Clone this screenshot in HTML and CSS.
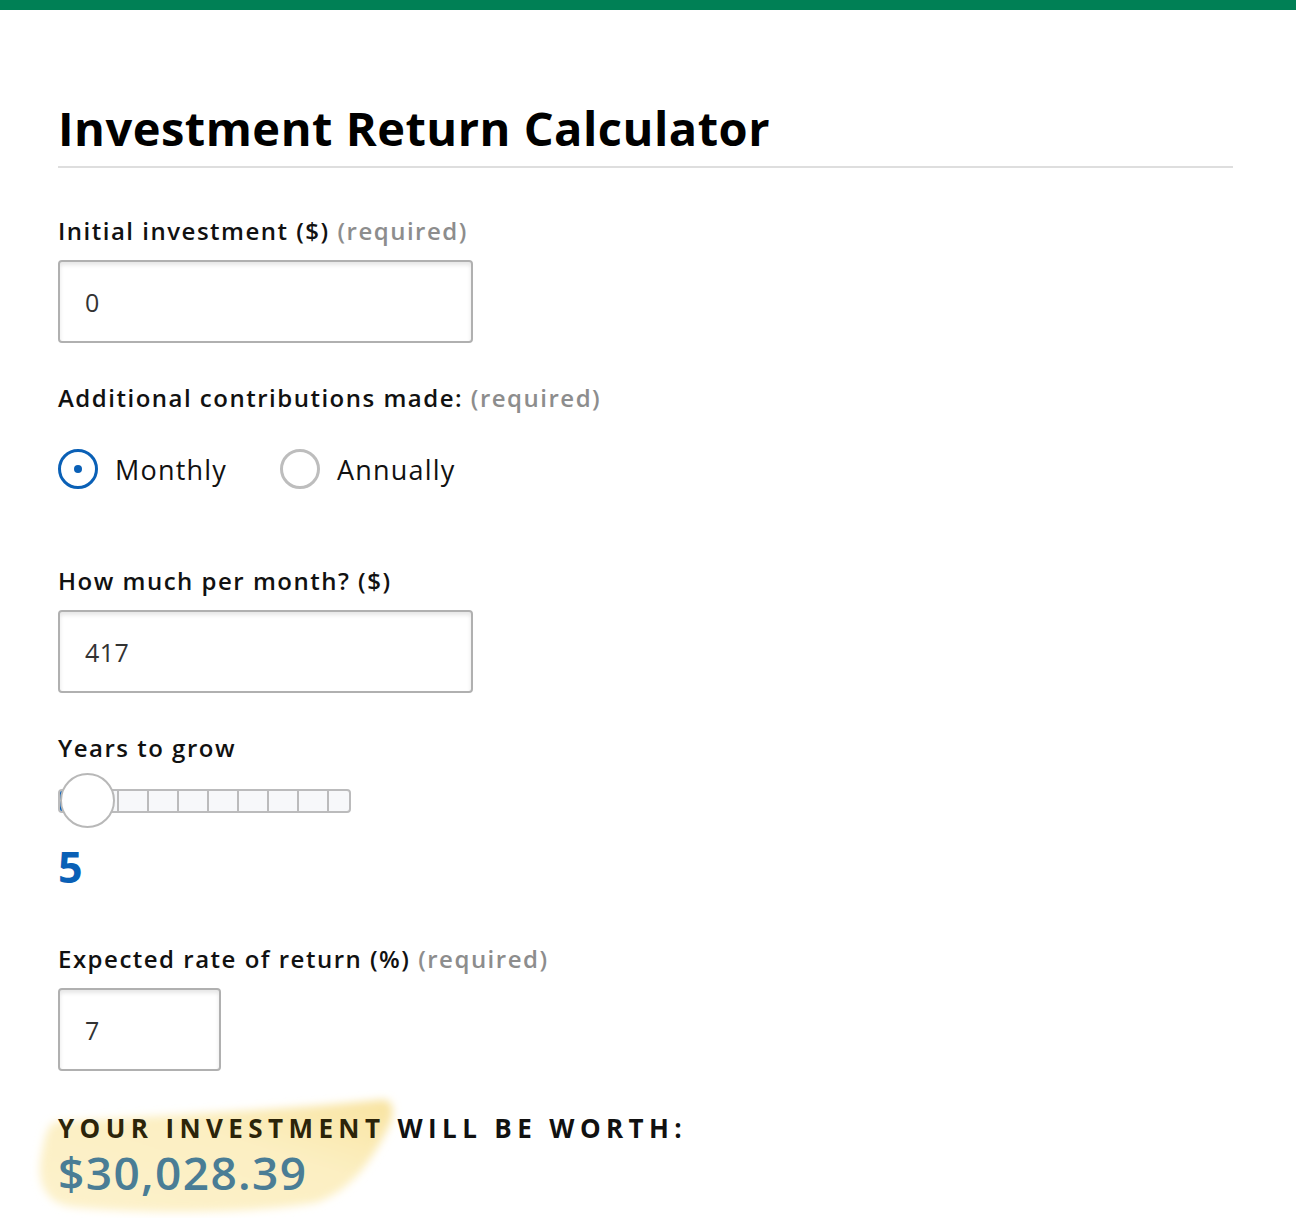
FILE: index.html
```html
<!DOCTYPE html>
<html lang="en">
<head>
<meta charset="utf-8">
<title>Investment Return Calculator</title>
<link rel="stylesheet" href="styles.css">
</head>
<body>
<div class="topbar"></div>
<main class="calc">
  <h1 class="title">Investment Return Calculator</h1>

  <div class="field first">
    <label class="label">Initial investment ($) <span class="req">(required)</span></label>
    <div class="input wide">0</div>
  </div>

  <div class="field">
    <div class="label">Additional contributions made: <span class="req">(required)</span></div>
    <div class="radios">
      <div class="radio"><span class="circle on"></span><span class="rtext">Monthly</span></div>
      <div class="radio"><span class="circle"></span><span class="rtext">Annually</span></div>
    </div>
  </div>

  <div class="field">
    <label class="label">How much per month? ($)</label>
    <div class="input wide">417</div>
  </div>

  <div class="field">
    <label class="label">Years to grow</label>
    <div class="slider">
      <div class="track">
        <span class="fill"></span>
        <span class="seg first"></span>
        <span class="seg"></span><span class="seg"></span><span class="seg"></span>
        <span class="seg"></span><span class="seg"></span><span class="seg"></span>
        <span class="seg"></span><span class="seg last"></span>
      </div>
      <span class="thumb"></span>
    </div>
    <div class="years">5</div>
  </div>

  <div class="field">
    <label class="label">Expected rate of return (%) <span class="req">(required)</span></label>
    <div class="input narrow">7</div>
  </div>

  <div class="result">
    <svg class="highlight" width="400" height="150" viewBox="0 0 400 150">
      <defs>
        <filter id="blur" x="-10%" y="-20%" width="120%" height="140%">
          <feGaussianBlur stdDeviation="4"/>
        </filter>
        <linearGradient id="hl" x1="0" y1="1" x2="1" y2="0">
          <stop offset="0" stop-color="#fdf2cc"/>
          <stop offset="0.6" stop-color="#fcefc2"/>
          <stop offset="1" stop-color="#f8e3a0"/>
        </linearGradient>
      </defs>
      <path d="M28 36 C 120 30, 260 24, 352 14 C 366 12, 368 26, 360 42 C 342 78, 322 104, 290 116 C 230 128, 110 128, 45 121 C 14 117, 8 92, 14 66 C 17 50, 20 38, 28 36 Z" fill="url(#hl)" filter="url(#blur)"/>
    </svg>
    <div class="rlabel"><span class="hl-text">YOUR INVESTMENT</span> WILL BE WORTH:</div>
    <div class="rvalue">$30,028.39</div>
  </div>
</main>
</body>
</html>
```
FILE: styles.css
```css
html, body {
  margin: 0;
  padding: 0;
  background: #fff;
}
body {
  font-family: "Open Sans", "Noto Sans", sans-serif;
  color: #111;
}
.topbar {
  height: 10px;
  background: #008055;
}
.calc {
  padding: 0 63px 0 58px;
}
.title {
  margin: 0;
  padding-top: 88px;
  padding-bottom: 8px;
  font-size: 47px;
  line-height: 60px;
  font-weight: 700;
  letter-spacing: 0.5px;
  color: #000;
  border-bottom: 2px solid #dedede;
}
.field {
  display: flex;
  flex-direction: column;
  align-items: flex-start;
}
.label {
  display: block;
  font-size: 24px;
  line-height: 30px;
  font-weight: 600;
  letter-spacing: 1.5px;
  color: #111;
  margin-top: 40px;
}
.field.first .label {
  margin-top: 48px;
}
.req {
  color: #8d8d8d;
  font-weight: 600;
}
.input {
  box-sizing: border-box;
  height: 83px;
  margin-top: 14px;
  border: 2px solid #b0b0b0;
  border-radius: 4px;
  box-shadow: inset 0 3px 4px rgba(0,0,0,0.10);
  padding: 0 25px;
  display: flex;
  align-items: center;
  font-size: 25px;
  letter-spacing: 0.5px;
  color: #333;
}
.wide { width: 415px; }
.narrow { width: 163px; }

.radios {
  display: flex;
  gap: 53px;
  margin-top: 36px;
  margin-bottom: 37px;
}
.radio {
  display: flex;
  align-items: center;
  gap: 17px;
}
.circle {
  box-sizing: border-box;
  width: 40px;
  height: 40px;
  border-radius: 50%;
  border: 3px solid #bdbdbd;
  display: flex;
  align-items: center;
  justify-content: center;
}
.circle.on {
  border-color: #0a60b6;
}
.circle.on::after {
  content: "";
  width: 8px;
  height: 8px;
  border-radius: 50%;
  background: #0a60b6;
}
.rtext {
  font-size: 27px;
  color: #111;
  letter-spacing: 1.2px;
}

.slider {
  position: relative;
  width: 293px;
  height: 56px;
  margin-top: 10px;
  display: flex;
  align-items: center;
}
.track {
  display: flex;
  width: 293px;
  height: 24px;
  box-sizing: border-box;
  border-radius: 4px;
  overflow: hidden;
  border: 2px solid #bbbbbc;
  background: #f7f8fa;
}
.fill {
  width: 5px;
  background: #0a60b6;
  flex: none;
}
.seg {
  flex: none;
  width: 28px;
  border-left: 2px solid #bbbbbc;
}
.seg.first {
  width: 26px;
  margin-left: 26px;
  border-left: none;
}
.seg.last {
  flex: 1;
}
.thumb {
  position: absolute;
  left: 2px;
  top: 0;
  width: 55px;
  height: 55px;
  box-sizing: border-box;
  border-radius: 50%;
  background: #fff;
  border: 2px solid #b8b8b8;
}
.years {
  font-size: 43px;
  font-weight: 700;
  color: #0a60b6;
  line-height: 50px;
  margin-top: 13px;
  margin-bottom: 12px;
}

.result {
  position: relative;
  margin-top: 41px;
  padding-bottom: 20px;
}
.rlabel {
  font-size: 26px;
  font-weight: 700;
  letter-spacing: 5.4px;
  color: #111;
  line-height: 32px;
  position: relative;
}
.hl-text {
  color: #2c2409;
}
.rvalue {
  font-size: 46px;
  font-weight: 600;
  letter-spacing: 1.4px;
  color: #4a7d95;
  line-height: 56px;
  position: relative;
}
.highlight {
  position: absolute;
  left: -30px;
  top: -26px;
  pointer-events: none;
}
```
